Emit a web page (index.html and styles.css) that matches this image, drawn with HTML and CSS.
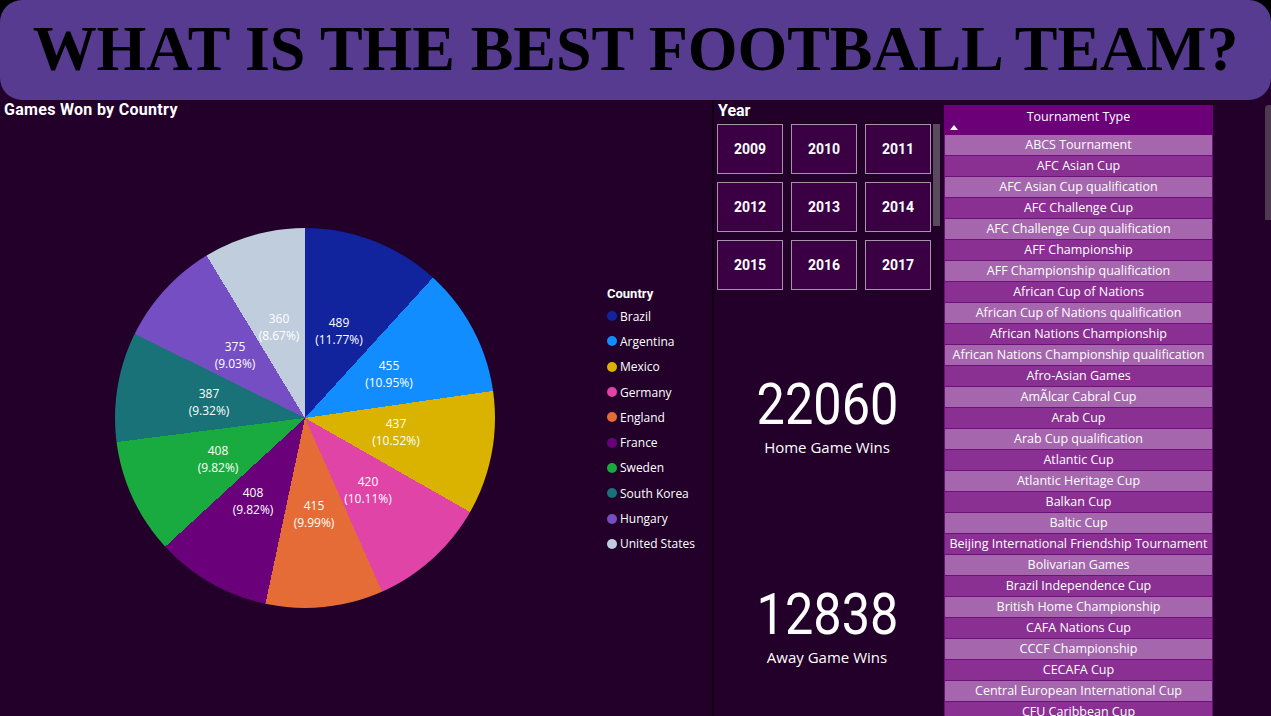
FILE: index.html
```html
<!DOCTYPE html>
<html lang="en">
<head>
  <meta charset="UTF-8">
  <title>Best Football Team</title>
  <link rel="stylesheet" href="styles.css">
</head>
<body>
  <header class="top">
    <h1 class="banner">WHAT IS THE BEST FOOTBALL TEAM?</h1>
  </header>

  <main class="board">
    <!-- pie chart -->
    <section class="panel games">
      <h2 class="panel-title">Games Won by Country</h2>
      <div class="chart">
        <div class="pie">
          <span class="slice-label" style="left:224px;top:103px">489<br>(11.77%)</span>
          <span class="slice-label" style="left:274px;top:146px">455<br>(10.95%)</span>
          <span class="slice-label" style="left:281px;top:204px">437<br>(10.52%)</span>
          <span class="slice-label" style="left:253px;top:262px">420<br>(10.11%)</span>
          <span class="slice-label" style="left:199px;top:286px">415<br>(9.99%)</span>
          <span class="slice-label" style="left:138px;top:273px">408<br>(9.82%)</span>
          <span class="slice-label" style="left:103px;top:231px">408<br>(9.82%)</span>
          <span class="slice-label" style="left:94px;top:174px">387<br>(9.32%)</span>
          <span class="slice-label" style="left:120px;top:127px">375<br>(9.03%)</span>
          <span class="slice-label" style="left:164px;top:99px">360<br>(8.67%)</span>
        </div>
        <ul class="legend">
          <li class="legend-title">Country</li>
          <li><i class="dot c-brazil"></i>Brazil</li>
          <li><i class="dot c-argentina"></i>Argentina</li>
          <li><i class="dot c-mexico"></i>Mexico</li>
          <li><i class="dot c-germany"></i>Germany</li>
          <li><i class="dot c-england"></i>England</li>
          <li><i class="dot c-france"></i>France</li>
          <li><i class="dot c-sweden"></i>Sweden</li>
          <li><i class="dot c-korea"></i>South Korea</li>
          <li><i class="dot c-hungary"></i>Hungary</li>
          <li><i class="dot c-usa"></i>United States</li>
        </ul>
      </div>
    </section>

    <!-- year slicer + cards -->
    <section class="panel middle">
      <h2 class="panel-title">Year</h2>
      <div class="slicer">
        <div class="years">
          <button class="year">2009</button>
          <button class="year">2010</button>
          <button class="year">2011</button>
          <button class="year">2012</button>
          <button class="year">2013</button>
          <button class="year">2014</button>
          <button class="year">2015</button>
          <button class="year">2016</button>
          <button class="year">2017</button>
        </div>
        <div class="scroll-thumb"></div>
      </div>
      <div class="cards">
        <div class="card">
          <div class="card-value">22060</div>
          <div class="card-label">Home Game Wins</div>
        </div>
        <div class="card">
          <div class="card-value">12838</div>
          <div class="card-label">Away Game Wins</div>
        </div>
      </div>
    </section>

    <!-- tournament table -->
    <section class="panel tournaments">
      <div class="table">
        <div class="table-head">Tournament Type<span class="sort-arrow"></span></div>
        <div class="row">ABCS Tournament</div>
        <div class="row">AFC Asian Cup</div>
        <div class="row">AFC Asian Cup qualification</div>
        <div class="row">AFC Challenge Cup</div>
        <div class="row">AFC Challenge Cup qualification</div>
        <div class="row">AFF Championship</div>
        <div class="row">AFF Championship qualification</div>
        <div class="row">African Cup of Nations</div>
        <div class="row">African Cup of Nations qualification</div>
        <div class="row">African Nations Championship</div>
        <div class="row">African Nations Championship qualification</div>
        <div class="row">Afro-Asian Games</div>
        <div class="row">AmÃlcar Cabral Cup</div>
        <div class="row">Arab Cup</div>
        <div class="row">Arab Cup qualification</div>
        <div class="row">Atlantic Cup</div>
        <div class="row">Atlantic Heritage Cup</div>
        <div class="row">Balkan Cup</div>
        <div class="row">Baltic Cup</div>
        <div class="row">Beijing International Friendship Tournament</div>
        <div class="row">Bolivarian Games</div>
        <div class="row">Brazil Independence Cup</div>
        <div class="row">British Home Championship</div>
        <div class="row">CAFA Nations Cup</div>
        <div class="row">CCCF Championship</div>
        <div class="row">CECAFA Cup</div>
        <div class="row">Central European International Cup</div>
        <div class="row">CFU Caribbean Cup</div>
      </div>
      <div class="table-scroll"></div>
    </section>
  </main>
</body>
</html>
```

FILE: styles.css
```css
body {
  margin: 0;
  width: 1271px;
  height: 716px;
  overflow: hidden;
  background-color: #22002a;
  color: #fff;
  font-family: "Open Sans", "Noto Sans", sans-serif;
}

/* banner */
.top {
  height: 100px;
  background: linear-gradient(#000 50%, #22002a 50%);
}

.banner {
  margin: 0;
  height: 100px;
  border-radius: 22px;
  background-color: #563b91;
  color: #000;
  font-family: "Liberation Serif", serif;
  font-weight: bold;
  font-size: 64px;
  letter-spacing: -0.1px;
  line-height: 98px;
  text-align: center;
  white-space: nowrap;
}

.board {
  display: grid;
  grid-template-columns: 712px 228px 331px;
  grid-template-rows: 616px;
  height: 616px;
}

.panel {
  overflow: hidden;
}

.panel-title {
  margin: 0;
  font-family: Roboto, sans-serif;
  font-weight: bold;
  font-size: 16px;
  letter-spacing: 0.3px;
  line-height: 20px;
}

/* pie */
.games {
  display: flex;
  flex-direction: column;
}

.games .panel-title {
  padding-left: 4px;
}

.chart {
  flex: 1;
  display: flex;
  align-items: center;
}

.pie {
  position: relative;
  width: 380px;
  height: 380px;
  margin-left: 115px;
  border-radius: 50%;
  background: conic-gradient(
    #12239e 0 11.77%,
    #118dff 0 22.72%,
    #d9b300 0 33.24%,
    #e044a7 0 43.35%,
    #e66c37 0 53.34%,
    #6b007b 0 63.16%,
    #1aab40 0 72.98%,
    #197278 0 82.30%,
    #744ec2 0 91.33%,
    #bfcddc 0 100%
  );
}

.slice-label {
  position: absolute;
  transform: translate(-50%, -50%);
  font-size: 12px;
  line-height: 17px;
  text-align: center;
  white-space: nowrap;
}

.legend {
  list-style: none;
  margin: 4px 0 0 112px;
  padding: 0;
  font-size: 12px;
}

.legend li {
  display: flex;
  align-items: center;
  height: 25.3px;
}

.legend .legend-title {
  height: 20px;
  font-family: Roboto, sans-serif;
  font-weight: bold;
  font-size: 13px;
}

.dot {
  width: 10px;
  height: 10px;
  border-radius: 50%;
  margin-right: 3px;
}

.c-brazil { background: #12239e; }
.c-argentina { background: #118dff; }
.c-mexico { background: #d9b300; }
.c-germany { background: #e044a7; }
.c-england { background: #e66c37; }
.c-france { background: #6b007b; }
.c-sweden { background: #1aab40; }
.c-korea { background: #197278; }
.c-hungary { background: #744ec2; }
.c-usa { background: #bfcddc; }

/* year slicer */
.middle {
  border-left: 2px solid #0e0012;
  padding-left: 3px;
  display: flex;
  flex-direction: column;
}

.middle .panel-title {
  font-size: 16px;
  letter-spacing: 0;
  line-height: 20px;
  padding-top: 1px;
  padding-left: 1px;
}

.slicer {
  display: flex;
  margin-top: 3px;
}

.years {
  display: grid;
  grid-template-columns: repeat(3, 66px);
  grid-auto-rows: 50px;
  gap: 8px;
}

.year {
  background-color: #3b0044;
  border: 1px solid #a394a6;
  color: #fff;
  font-family: Roboto, sans-serif;
  font-weight: bold;
  font-size: 14px;
  padding: 0;
}

.scroll-thumb {
  width: 7px;
  height: 102px;
  margin-left: 2px;
  background-color: #5a4a5e;
}

.cards {
  padding-top: 19px;
}

.card {
  height: 210px;
  display: flex;
  flex-direction: column;
  align-items: center;
  justify-content: center;
  margin-left: -3px;
}

.card-value {
  font-family: Roboto, sans-serif;
  font-size: 58px;
  line-height: 66px;
  transform: scaleX(0.87);
}

.card-label {
  font-size: 15px;
  line-height: 20px;
}

/* tournament table */
.tournaments {
  display: flex;
  justify-content: space-between;
  padding-left: 4px;
}

.table {
  width: 269px;
  margin-top: 5px;
  font-size: 12.5px;
  text-align: center;
}

.table-head {
  position: relative;
  height: 30px;
  line-height: 23px;
  background-color: #6b0079;
}

.sort-arrow {
  position: absolute;
  left: 6px;
  top: 20px;
  border-left: 4px solid transparent;
  border-right: 4px solid transparent;
  border-bottom: 5px solid #fff;
}

.row {
  height: 21px;
  box-sizing: border-box;
  line-height: 20px;
  border: 1px solid #6e1079;
  border-top: none;
  white-space: nowrap;
}

.row:nth-child(even) {
  background-color: #a566ae;
}

.row:nth-child(odd) {
  background-color: #8a3093;
}

.table-scroll {
  width: 6px;
  height: 115px;
  margin-top: 5px;
  border-radius: 4px 0 0 0;
  background-color: #4b3a50;
}
```
